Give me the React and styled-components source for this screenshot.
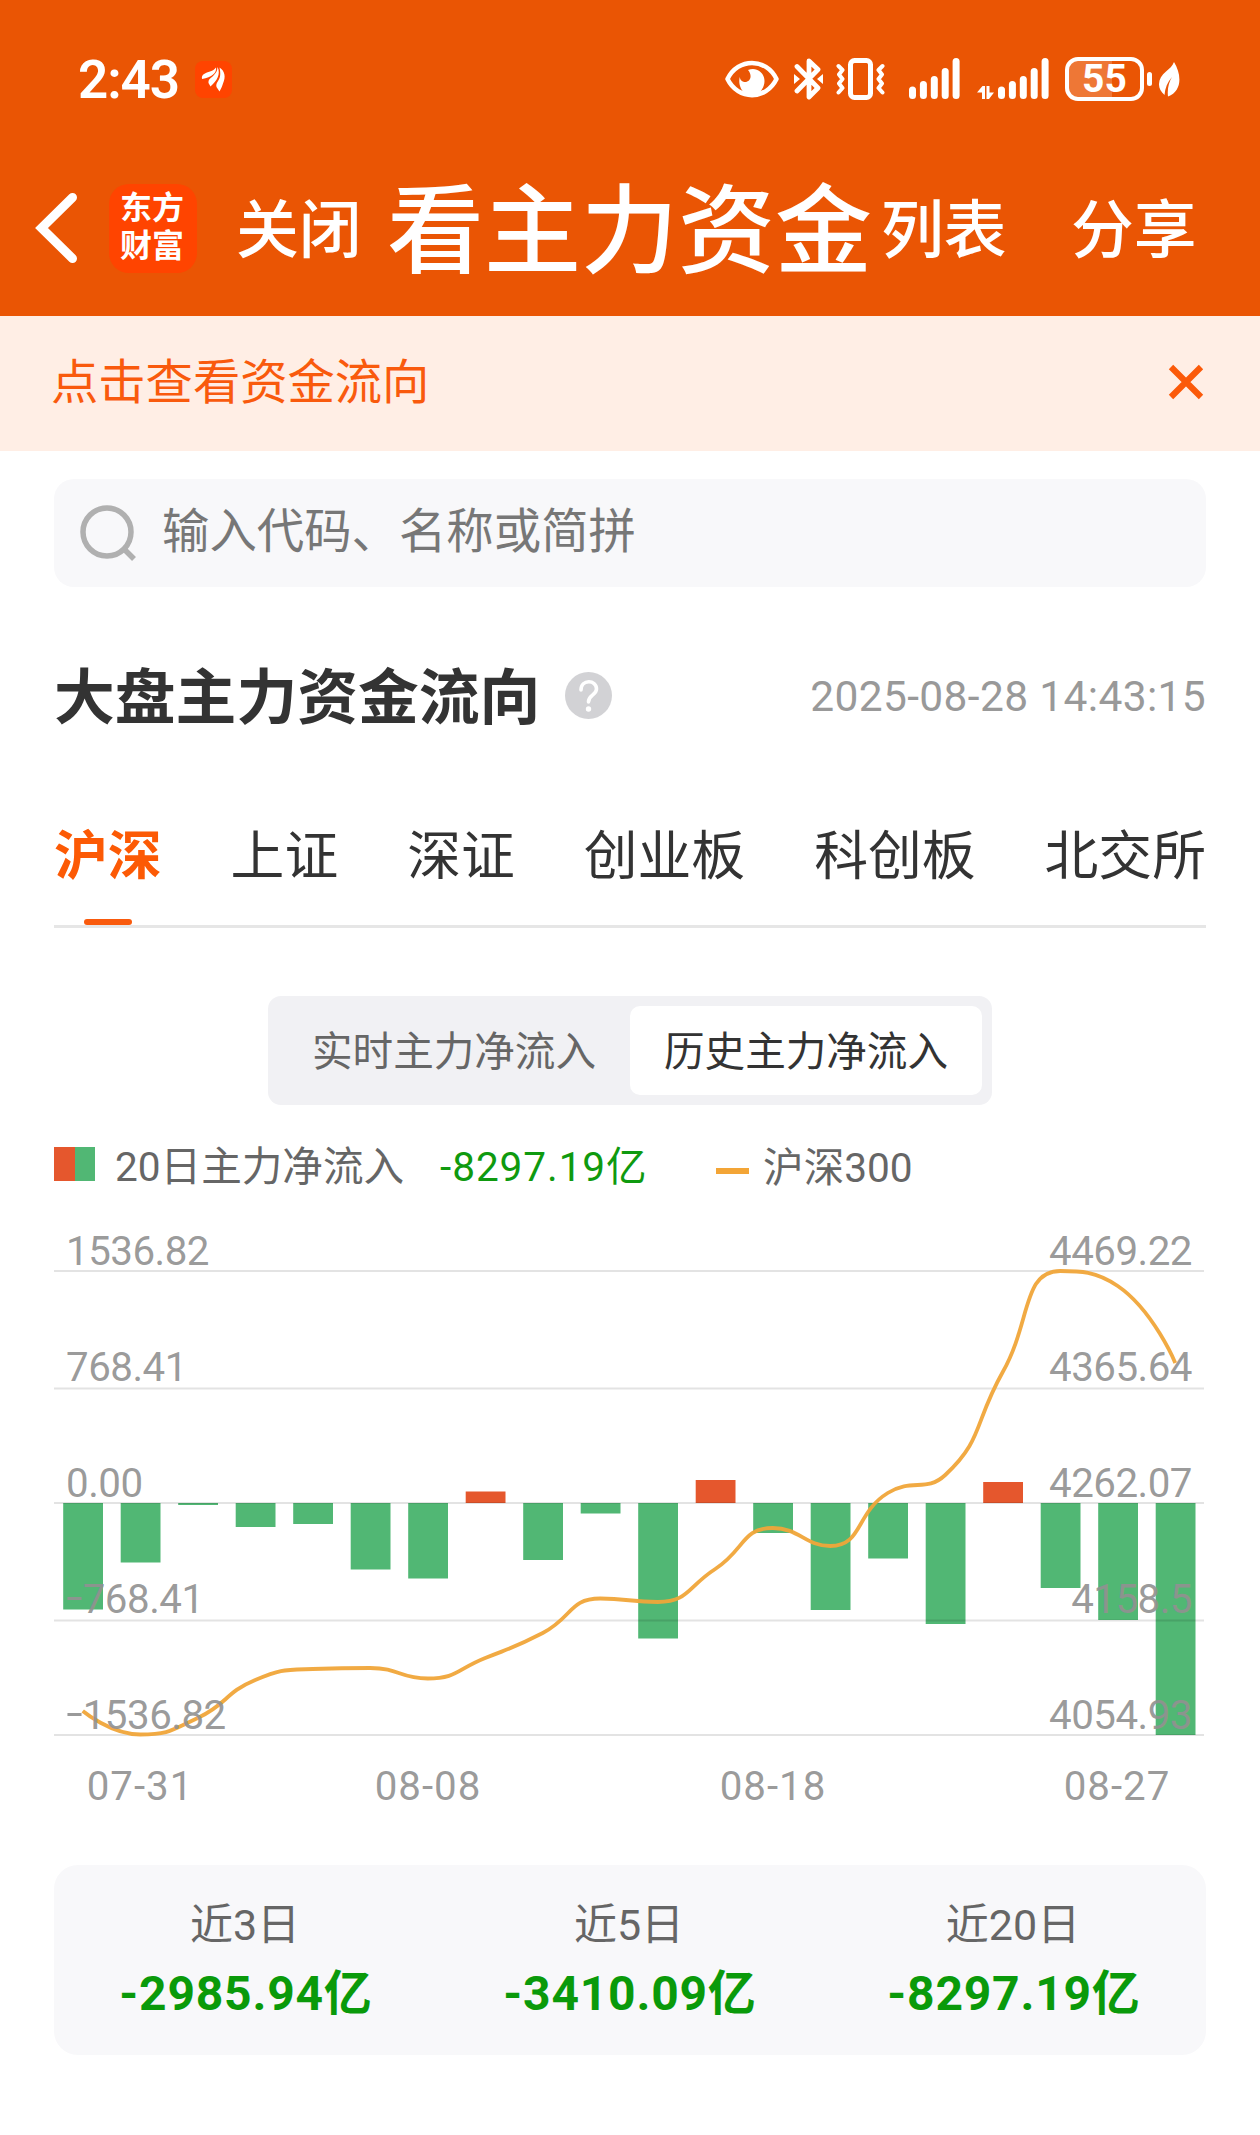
import React from "react";
import styled, { createGlobalStyle } from "styled-components";

const GlobalStyle = createGlobalStyle`
  * {
    box-sizing: border-box;
  }
  body {
    margin: 0;
    background-color: white;
    font-family: Roboto, "Noto Sans CJK SC", sans-serif;
    color: #333;
  }
  svg {
    display: block;
    flex-shrink: 0;
  }
`;

const Page = styled.div`
  width: 1260px;
  height: 2135px;
  overflow: hidden;
`;

const Header = styled.header`
  height: 316px;
  color: white;
  background-color: #ea5504;
`;

const StatusBar = styled.div`
  display: flex;
  align-items: center;
  height: 158px;
  padding: 0 80px 0 78px;
`;
const Time = styled.span`
  width: 117px;
  padding-top: 1px;
  font-size: 53px;
  font-weight: 600;
  line-height: 60px;
  letter-spacing: -1.1px;
  white-space: nowrap;
`;
const StatusIcons = styled.div`
  display: flex;
  align-items: center;
  margin: 0 0 1px auto;
`;
const IconSlot = styled.span`
  margin-right: ${(props) => props.$gap}px;
`;
const Battery = styled.span`
  display: flex;
  align-items: center;
  justify-content: center;
  width: 79px;
  height: 44px;
  margin-right: 3px;
  padding-top: 1px;
  border: 4px solid white;
  border-radius: 13px;
  background: linear-gradient(
    to right,
    rgba(255, 255, 255, 0.2) 61%,
    transparent 61%
  );
  font-size: 39px;
  font-weight: 700;
  line-height: 36px;
`;
const BatteryTip = styled.span`
  width: 5px;
  height: 14px;
  margin-right: 7px;
  border-radius: 3px;
  background-color: white;
`;

const NavBar = styled.nav`
  display: flex;
  align-items: center;
  height: 140px;
  padding-left: 34px;
`;
const Logo = styled.span`
  display: flex;
  flex-direction: column;
  align-items: center;
  justify-content: center;
  width: 88px;
  height: 89px;
  margin: 0 39px 0 31px;
  padding: 0 2px 3px 0;
  border-radius: 20px;
  background-color: #ff4400;
  font-size: 32px;
  font-weight: 700;
  line-height: 38px;
`;
const NavText = styled.span`
  width: 126px;
  margin: 0 ${(props) => props.$gap || 0}px 7px 0;
  font-family: "Noto Sans CJK SC", sans-serif;
  font-size: 62.8px;
  font-weight: 500;
  line-height: 90px;
  white-space: nowrap;
`;
const NavTitle = styled.h1`
  width: 485px;
  margin: 0 9px 11px 0;
  font-family: "Noto Sans CJK SC", sans-serif;
  font-size: 97px;
  font-weight: 500;
  line-height: 124px;
  white-space: nowrap;
`;

const Notice = styled.div`
  display: flex;
  align-items: center;
  justify-content: space-between;
  height: 135px;
  padding: 0 56px 0 51px;
  background-color: #ffeee5;
  color: #f95a0d;
  font-size: 47.3px;
`;
const NoticeText = styled.span`
  padding-bottom: 10px;
`;
const CloseButton = styled.span`
  padding-bottom: 4px;
`;

const Content = styled.main`
  padding: 28px 54px 0;
`;

const SearchBox = styled.div`
  display: flex;
  align-items: center;
  gap: 26px;
  height: 108px;
  padding: 0 26px;
  border-radius: 20px;
  background-color: #f8f8fa;
`;
const Placeholder = styled.span`
  padding-bottom: 11px;
  color: #777;
  font-size: 47.4px;
`;

const TitleRow = styled.div`
  display: flex;
  align-items: center;
  height: 80px;
  margin-top: 69px;
`;
const SectionTitle = styled.h2`
  margin: 0 25px 7px 0;
  font-family: "Noto Sans CJK SC", sans-serif;
  font-size: 60.8px;
  font-weight: 700;
  line-height: 73px;
`;
const HelpSlot = styled.span`
  margin-bottom: 1px;
`;
const UpdateTime = styled.span`
  margin-left: auto;
  padding-top: 1px;
  color: #999;
  font-size: 42.5px;
  letter-spacing: 0.35px;
`;

const Tabs = styled.div`
  display: flex;
  justify-content: space-between;
  height: 116px;
  margin-top: 76px;
  border-bottom: 3px solid #e6e6e6;
`;
const Tab = styled.div`
  display: flex;
  flex-direction: column;
  align-items: center;
  justify-content: space-between;
  color: ${(props) => (props.$active ? "#fc5a05" : "#333")};
  font-family: "Noto Sans CJK SC", sans-serif;
  font-size: 53.8px;
  font-weight: ${(props) => (props.$active ? 700 : 400)};
  line-height: 80px;
`;
const TabMark = styled.span`
  width: 48px;
  height: 6px;
  border-radius: 3px;
  background-color: #f95a0d;
`;

const Switcher = styled.div`
  display: flex;
  width: 724px;
  height: 109px;
  margin: 68px auto 0;
  padding: 10px;
  border-radius: 13px;
  background-color: #f1f1f4;
`;
const SwitchItem = styled.div`
  flex: 1;
  border-radius: 10px;
  background-color: ${(props) => (props.$active ? "white" : "transparent")};
  color: ${(props) => (props.$active ? "#333" : "#666")};
  font-family: "Noto Sans CJK SC", sans-serif;
  font-size: 40.6px;
  line-height: 86px;
  text-align: center;
`;

const Legend = styled.div`
  display: flex;
  align-items: center;
  height: 60px;
  margin: 32px 0 3px;
  color: #666;
  font-size: 40.6px;
  line-height: 60px;
  white-space: nowrap;
`;
const BarSwatch = styled.span`
  width: 41px;
  height: 34px;
  margin: 0 20px 6px 0;
  background: linear-gradient(to right, #e5572d 50%, #51b774 50%);
`;
const LegendValue = styled.span`
  width: 206px;
  margin: 0 70px 0 36px;
  color: #0f9a0f;
  letter-spacing: 0.9px;
`;
const LineSwatch = styled.span`
  width: 33px;
  height: 6px;
  margin: 8px 14px 0 0;
  background-color: #f3a536;
`;
const LegendName = styled.span`
  padding-top: 2px;
`;

const ChartSvg = styled.svg`
  overflow: visible;
  text {
    font-size: 40.3px;
    fill: #919191;
    fill-opacity: 0.92;
  }
`;

const Summary = styled.div`
  display: grid;
  grid-template-columns: repeat(3, 1fr);
  height: 190px;
  margin-top: 42px;
  padding-top: 30px;
  border-radius: 24px;
  background-color: #f8f8fa;
  text-align: center;
`;
const SummaryLabel = styled.div`
  height: 64px;
  padding-right: 2px;
  color: #666;
  font-size: 43px;
  line-height: 60px;
`;
const SummaryValue = styled.div`
  color: #0a9a0a;
  font-size: 48px;
  font-weight: 700;
  line-height: 70px;
  letter-spacing: 0.8px;
`;

const tabs = ["沪深", "上证", "深证", "创业板", "科创板", "北交所"];

const summary = [
  { label: "近3日", value: "-2985.94亿" },
  { label: "近5日", value: "-3410.09亿" },
  { label: "近20日", value: "-8297.19亿" },
];

const CHART_WIDTH = 1150;
const STEP = 57.5;
const ZERO = 303;
const gridLines = [71, 188.5, ZERO, 420.5, 535];
const leftLabels = ["1536.82", "768.41", "0.00", "-768.41", "-1536.82"];
const rightLabels = ["4469.22", "4365.64", "4262.07", "4158.5", "4054.93"];
const dates = [
  { label: "07-31", x: 86 },
  { label: "08-08", x: 374 },
  { label: "08-18", x: 719 },
  { label: "08-27", x: 1063 },
];

// bar lengths in px from the zero line, negative is outflow
const flows = [
  -106.5, -59.5, -2, -24, -21, -66.5, -75.5, 11.5, -57, -10.5, -135.5, 23,
  -30, -107, -55.5, -121, 21, -85, -117, -232,
];
const indexLine = [
  511, 534.5, 518, 480, 469, 468, 478.5, 458, 433, 398.5, 402, 369, 328, 346,
  293, 275, 172, 71, 86, 163,
];

const clamp = (value, a, b) =>
  Math.max(Math.min(a, b), Math.min(Math.max(a, b), value));

// smooth line through all the points, never overshooting a neighbour
const smoothPath = (points) => {
  let path = `M${points[0].x} ${points[0].y}`;
  let cp = points[0];
  for (let i = 1; i < points.length; i++) {
    const p = points[i];
    const prev = points[i - 1];
    const next = points[i + 1];
    let before = p;
    let after = p;
    if (next) {
      const lenPrev = Math.hypot(p.x - prev.x, p.y - prev.y);
      const lenNext = Math.hypot(next.x - p.x, next.y - p.y);
      const ratio = lenNext / (lenNext + lenPrev);
      const ax = clamp(p.x + (next.x - prev.x) * 0.5 * ratio, next.x, p.x);
      const ay = clamp(p.y + (next.y - prev.y) * 0.5 * ratio, next.y, p.y);
      const bx = p.x - ((ax - p.x) * lenPrev) / lenNext;
      const by = p.y - ((ay - p.y) * lenPrev) / lenNext;
      before = { x: clamp(bx, prev.x, p.x), y: clamp(by, prev.y, p.y) };
      after = {
        x: p.x + ((p.x - before.x) * lenNext) / lenPrev,
        y: p.y + ((p.y - before.y) * lenNext) / lenPrev,
      };
    }
    path += `C${cp.x} ${cp.y} ${before.x} ${before.y} ${p.x} ${p.y}`;
    cp = after;
  }
  return path;
};

const Chart = () => {
  const points = indexLine.map((y, i) => ({ x: 28.75 + i * STEP, y }));
  return (
    <ChartSvg width="1152" height="623" viewBox="0 0 1152 623">
      {flows.map((value, i) => (
        <rect
          key={i}
          x={9.2 + i * STEP}
          y={value > 0 ? ZERO - value : ZERO}
          width={39.8}
          height={Math.abs(value)}
          fill={value > 0 ? "#e5572d" : "#51b774"}
        />
      ))}
      {gridLines.map((y) => (
        <rect
          key={y}
          x="0"
          y={y - 1}
          width={CHART_WIDTH}
          height="2"
          fill="#000"
          fillOpacity="0.11"
        />
      ))}
      <path
        d={smoothPath(points)}
        fill="none"
        stroke="#f0a539"
        strokeOpacity="0.95"
        strokeWidth="3.8"
      />
      {leftLabels.map((label, i) => (
        <text key={label} x="12" y={65 + i * 116} letterSpacing="-0.5">
          {label[0] === "-" ? (
            <>
              <tspan fontSize="60" fontWeight="300" dy="4">
                -
              </tspan>
              <tspan dy="-4">{label.slice(1)}</tspan>
            </>
          ) : (
            label
          )}
        </text>
      ))}
      {rightLabels.map((label, i) => (
        <text
          key={label}
          x="1138"
          y={65 + i * 116}
          textAnchor="end"
          letterSpacing="-0.5"
        >
          {label}
        </text>
      ))}
      {dates.map((date) => (
        <text
          key={date.label}
          x={date.x}
          y="600"
          textAnchor="middle"
          letterSpacing="1"
        >
          {date.label}
        </text>
      ))}
    </ChartSvg>
  );
};

const BrandIcon = () => (
  <svg width="37" height="37" viewBox="0 0 37 37">
    <rect width="37" height="37" rx="8" fill="#ff4400" />
    <g fill="white">
      <path d="M7 18C6 13 11 12 15 10.500C18 9.500 20 8 21 6.500C22 12 17 16 7 18Z" />
      <path d="M13.500 22C13 18 16 17 18.500 14.500C21 12 22.500 9.500 22.500 6C26 13 22 20 15.500 25.500Z" />
      <path d="M21.500 26C20.500 22 24 20 25 15.500C25.700 12 25 9 24.500 6.500C30 10 31 16 28 22.500C27 25.500 26 28 24.500 30.500Z" />
    </g>
  </svg>
);

const EyeIcon = () => (
  <svg width="54" height="40" viewBox="0 0 54 40" fill="none">
    <path
      d="M2.500 20C13 -1.500 41 -1.500 51.500 20C41 41.500 13 41.500 2.500 20Z"
      stroke="white"
      strokeWidth="4.500"
      strokeLinejoin="round"
    />
    <path
      d="M15 17.500C14.500 20.500 17 23 20 23C25 23 28 17 23 11C32 7.500 39.500 14 39.500 22C39.500 27 37 32 32 36H22C15 32 13 23 15 17.500Z"
      fill="white"
    />
  </svg>
);

const BluetoothIcon = () => (
  <svg width="29" height="44" viewBox="0 0 29 44" fill="none">
    <path
      d="M3 9.500L24 31L15 40V4L24 12.500L3 34"
      stroke="white"
      strokeWidth="4.800"
      strokeLinecap="round"
      strokeLinejoin="round"
    />
    <path d="M0 17L6 22L0 27ZM29 17L23 22L29 27Z" fill="white" />
  </svg>
);

const VibrateIcon = () => (
  <svg width="50" height="42" viewBox="0 0 50 42" fill="none">
    <rect
      x="14.500"
      y="2.500"
      width="20"
      height="37"
      rx="4"
      stroke="white"
      strokeWidth="5"
    />
    <path
      d="M2.500 8L6.500 12L3 16.500L6.500 21L3 25.500L6.500 30L2.500 34.500M46.500 8L42.500 12L46 16.500L42.500 21L46 25.500L42.500 30L46.500 34.500"
      stroke="white"
      strokeWidth="4"
      strokeLinecap="round"
      strokeLinejoin="round"
    />
  </svg>
);

const SignalIcon = ({ data }) => {
  const tops = [28.5, 23, 18, 10, 0];
  const left = data ? 21 : 0;
  return (
    <svg width={51 + left} height="41" viewBox={`0 0 ${51 + left} 41`}>
      {tops.map((top, i) => (
        <rect
          key={top}
          x={left + i * 10.9}
          y={top}
          width="7"
          height={41 - top}
          rx="3.500"
          fill="white"
        />
      ))}
      {data && (
        <path
          d="M0 34.500L5.500 28H8V41H5V34.500ZM9.500 28H12.500V34.500H17L12 41H9.500Z"
          fill="white"
        />
      )}
    </svg>
  );
};

const LeafIcon = () => (
  <svg width="21" height="36" viewBox="0 0 21 36">
    <path
      d="M15 1C23 14 23 30 9 35.500C8 28 10 21 13 16C8.500 21 6 27 5.500 34C-3 27 -1 17 7 10.500C10.500 7.500 13.500 5 15 1Z"
      fill="white"
    />
  </svg>
);

const BackIcon = () => (
  <svg width="44" height="72" viewBox="0 0 44 72" fill="none">
    <path
      d="M38.500 5.500L7.500 36L38.500 66.500"
      stroke="white"
      strokeWidth="9"
      strokeLinecap="round"
      strokeLinejoin="miter"
    />
  </svg>
);

const CloseIcon = () => (
  <svg width="36" height="36" viewBox="0 0 36 36">
    <path d="M3 3L33 33M33 3L3 33" stroke="#fb5a0a" strokeWidth="6.200" />
  </svg>
);

const SearchIcon = () => (
  <svg width="56" height="56" viewBox="0 0 56 56" fill="none">
    <circle cx="27" cy="27" r="24" stroke="#b0b0b0" strokeWidth="5.500" />
    <path d="M43 43L54 54" stroke="#b0b0b0" strokeWidth="5.500" />
  </svg>
);

const HelpIcon = () => (
  <svg width="47" height="47" viewBox="0 0 47 47" fill="none">
    <circle cx="23.500" cy="23.500" r="23.500" fill="#d2d2d5" />
    <path
      d="M16 18C16 7 31.500 7.500 31.500 17C31.500 23 23.500 23 23.500 30"
      stroke="white"
      strokeWidth="3.600"
      strokeLinecap="round"
    />
    <circle cx="23.500" cy="37" r="2.700" fill="white" />
  </svg>
);

const App = () => {
  const [activeTab, setActiveTab] = React.useState("沪深");
  const [history, setHistory] = React.useState(true);
  const [showNotice, setShowNotice] = React.useState(true);

  return (
    <Page>
      <GlobalStyle />
      <Header>
        <StatusBar>
          <Time>2:43</Time>
          <BrandIcon />
          <StatusIcons>
            <IconSlot $gap={15}>
              <EyeIcon />
            </IconSlot>
            <IconSlot $gap={13}>
              <BluetoothIcon />
            </IconSlot>
            <IconSlot $gap={23}>
              <VibrateIcon />
            </IconSlot>
            <IconSlot $gap={17}>
              <SignalIcon />
            </IconSlot>
            <IconSlot $gap={16}>
              <SignalIcon data />
            </IconSlot>
            <Battery>55</Battery>
            <BatteryTip />
            <LeafIcon />
          </StatusIcons>
        </StatusBar>
        <NavBar>
          <BackIcon />
          <Logo>
            <span>东方</span>
            <span>财富</span>
          </Logo>
          <NavText $gap={25}>关闭</NavText>
          <NavTitle>看主力资金</NavTitle>
          <NavText $gap={64}>列表</NavText>
          <NavText>分享</NavText>
        </NavBar>
      </Header>
      {showNotice && (
        <Notice>
          <NoticeText>点击查看资金流向</NoticeText>
          <CloseButton onClick={() => setShowNotice(false)}>
            <CloseIcon />
          </CloseButton>
        </Notice>
      )}
      <Content>
        <SearchBox>
          <SearchIcon />
          <Placeholder>输入代码、名称或简拼</Placeholder>
        </SearchBox>
        <TitleRow>
          <SectionTitle>大盘主力资金流向</SectionTitle>
          <HelpSlot>
            <HelpIcon />
          </HelpSlot>
          <UpdateTime>2025-08-28 14:43:15</UpdateTime>
        </TitleRow>
        <Tabs>
          {tabs.map((tab) => (
            <Tab
              key={tab}
              $active={tab === activeTab}
              onClick={() => setActiveTab(tab)}
            >
              {tab}
              {tab === activeTab && <TabMark />}
            </Tab>
          ))}
        </Tabs>
        <Switcher>
          <SwitchItem $active={!history} onClick={() => setHistory(false)}>
            实时主力净流入
          </SwitchItem>
          <SwitchItem $active={history} onClick={() => setHistory(true)}>
            历史主力净流入
          </SwitchItem>
        </Switcher>
        <Legend>
          <BarSwatch />
          <span>20日主力净流入</span>
          <LegendValue>-8297.19亿</LegendValue>
          <LineSwatch />
          <LegendName>沪深300</LegendName>
        </Legend>
        <Chart />
        <Summary>
          {summary.map((item) => (
            <div key={item.label}>
              <SummaryLabel>{item.label}</SummaryLabel>
              <SummaryValue>{item.value}</SummaryValue>
            </div>
          ))}
        </Summary>
      </Content>
    </Page>
  );
};

export default App;
